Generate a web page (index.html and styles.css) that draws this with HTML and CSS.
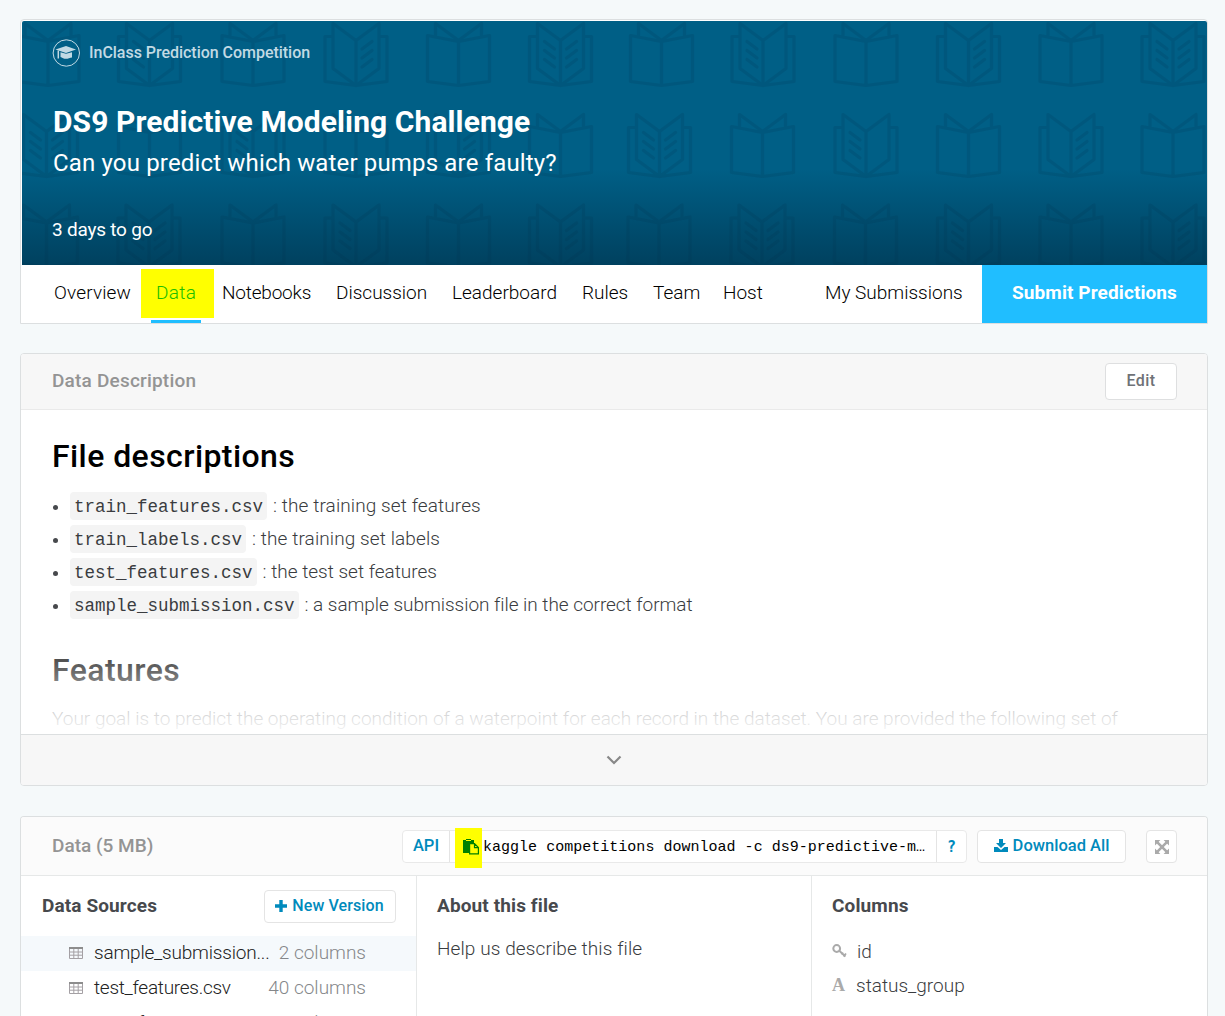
FILE: index.html
```html
<!DOCTYPE html>
<html lang="en">
<head>
<meta charset="utf-8">
<title>DS9 Predictive Modeling Challenge</title>
<link rel="stylesheet" href="styles.css">
</head>
<body>
<svg class="defs" aria-hidden="true">
  <defs>
    <g id="plain"><path d="M-31 14L0 20L31 14V60L0 64L-31 60ZM0 20V64M-23 14V2L0 19L23 2V14"/></g>
    <g id="open"><path d="M-23 2L0 19L23 2V47L0 64L-23 47ZM0 19V64M-23 15H-31V60L0 64L31 60V15H23"/></g>
    <g id="left"><use href="#open"/><path d="M-16 20L-6 27.500M-16 29L-6 36.500M-16 38L-6 45.500"/></g>
    <g id="right"><use href="#open"/><path d="M16 20L6 27.500M16 29L6 36.500M16 38L6 45.500"/></g>
    <g id="both"><use href="#left"/><path d="M16 20L6 27.500M16 29L6 36.500M16 38L6 45.500"/></g>
    <symbol id="table" viewBox="0 0 14 12"><path d="M.5 1.500h13v10H.5zM.5 5h13M.5 8.200h13M4.800 2v9.500M9.200 2v9.500" fill="none" stroke="#a4a0a4"/><path d="M0 0h14v2H0z" fill="#8d8d8d"/></symbol>
  </defs>
</svg>
<main class="page">
  <header class="hero-card">
    <div class="hero">
      <svg class="books" width="1185" height="244" viewBox="22 21 1185 244">
        <g transform="translate(0 21.500)"><use href="#plain" x="48"/><use href="#left" x="149.500"/><use href="#plain" x="253"/><use href="#right" x="356"/><use href="#plain" x="458.500"/><use href="#both" x="560.500"/><use href="#plain" x="661.500"/><use href="#left" x="763"/><use href="#plain" x="866"/><use href="#right" x="968.500"/><use href="#plain" x="1071"/><use href="#both" x="1173"/></g>
        <g transform="translate(0 112.500)"><use href="#both" x="46.500"/><use href="#plain" x="149.500"/><use href="#left" x="253"/><use href="#plain" x="356"/><use href="#right" x="458.500"/><use href="#plain" x="560.500"/><use href="#both" x="659.500"/><use href="#plain" x="762.500"/><use href="#left" x="866"/><use href="#plain" x="968.500"/><use href="#right" x="1071"/><use href="#plain" x="1173"/></g>
        <g transform="translate(0 203)"><use href="#plain" x="46.500"/><use href="#both" x="149"/><use href="#plain" x="253"/><use href="#left" x="356"/><use href="#plain" x="458.500"/><use href="#right" x="560.500"/><use href="#plain" x="659"/><use href="#both" x="762"/><use href="#plain" x="865.500"/><use href="#left" x="968.500"/><use href="#plain" x="1071"/><use href="#right" x="1173"/></g>
      </svg>
      <div class="hero-text">
        <div class="kind">
          <svg width="28" height="28" viewBox="0 0 28 28"><circle cx="14.300" cy="14" r="13.200" fill="none" stroke="currentColor"/><path d="M3.500 10.500L14 7l10 3.500L14 14z" fill="currentColor"/><path d="M8.500 13.200l5.500 1.600 6-1.600v5.300c-2 .3-4 1.300-6 1.300s-4-1-5.500-1.800z" fill="currentColor"/><path d="M6.300 11.500v8" stroke="currentColor" stroke-width="1.500"/></svg>
          <span>InClass Prediction Competition</span>
        </div>
        <h1>DS9 Predictive Modeling Challenge</h1>
        <p class="sub">Can you predict which water pumps are faulty?</p>
        <p class="left-time">3 days to go</p>
      </div>
    </div>
    <nav class="tabs">
      <a class="t1">Overview</a><a class="active">Data</a><a class="t3">Notebooks</a><a class="t4">Discussion</a><a class="t5">Leaderboard</a><a class="t6">Rules</a><a class="t7">Team</a><a class="t8">Host</a>
      <a class="mine">My Submissions</a><a class="submit">Submit Predictions</a>
    </nav>
  </header>

  <section class="card description">
    <div class="card-head"><h2 class="desc-title">Data Description</h2><button class="edit">Edit</button></div>
    <div class="desc-body">
      <h3 class="files-title">File descriptions</h3>
      <ul>
        <li><code>train_features.csv</code><span class="d1">: the training set features</span></li>
        <li><code>train_labels.csv</code><span class="d1">: the training set labels</span></li>
        <li><code>test_features.csv</code><span>: the test set features</span></li>
        <li><code>sample_submission.csv</code><span class="d4">: a sample submission file in the correct format</span></li>
      </ul>
      <h3 class="features-title">Features</h3>
      <p class="goal">Your goal is to predict the operating condition of a waterpoint for each record in the dataset. You are provided the following set of</p>
      <div class="fade"></div>
    </div>
    <div class="expand"><svg width="16" height="10" viewBox="0 0 16 10"><path d="M1.500 1.500L8 8l6.500-6.500" fill="none" stroke="#888" stroke-width="2.200"/></svg></div>
  </section>

  <section class="card data">
    <div class="data-head">
      <h2>Data (5 MB)</h2>
      <div class="api">
        <span class="api-label">API</span>
        <span class="copy"><svg width="16" height="16" viewBox="0 0 16 16"><path d="M0 1h3V0h5v1h3v3H7.500L6 6v8H0z" fill="#008000"/><path d="M3 1.500h5" stroke="#ff0"/><path d="M6.600 4.600h4.900l3.900 3.900v6.400H6.600zM11.500 4.600v4h3.900" fill="#ff0" stroke="#008000" stroke-width="1.200"/></svg></span>
        <span class="cmd">kaggle competitions download -c ds9-predictive-m…</span>
        <span class="help">?</span>
      </div>
      <button class="download"><svg width="14" height="13" viewBox="0 0 14 13"><path d="M5 0h4v4h3L7 9 2 4h3zM0 8h3.500L7 11l3.500-3H14v5H0z" fill="currentColor"/></svg><span>Download All</span></button>
      <button class="full"><svg width="14" height="14" viewBox="0 0 13 13"><path d="M2 2l9 9M11 2l-9 9" stroke="#aaa" stroke-width="2.400"/><path d="M0 0h5L0 5zM13 0v5L8 0zM0 13V8l5 5zM13 13H8l5-5z" fill="#aaa"/></svg></button>
    </div>
    <div class="columns">
      <div class="sources">
        <div class="src-head"><h4>Data Sources</h4><button class="new"><svg width="12" height="12" viewBox="0 0 12 12"><path d="M6 0v12M0 6h12" stroke="currentColor" stroke-width="3.400"/></svg><span>New Version</span></button></div>
        <div class="file selected"><svg width="14" height="12"><use href="#table"/></svg><span class="f1">sample_submission...</span><em>2 columns</em></div>
        <div class="file"><svg width="14" height="12"><use href="#table"/></svg><span class="f2">test_features.csv</span><em>40 columns</em></div>
        <div class="file"><svg width="14" height="12"><use href="#table"/></svg><span class="f2">train_features.csv</span><em>40 columns</em></div>
      </div>
      <div class="about"><h4>About this file</h4><p>Help us describe this file</p></div>
      <div class="cols"><h4>Columns</h4>
        <div class="col"><svg width="15" height="14" viewBox="0 0 15 14"><circle cx="4.700" cy="4.500" r="3.400" fill="none" stroke="#aaa" stroke-width="2"/><path d="M7 6.500l6.500 6M9.500 10.500L11 8.500M11.500 12.500L14 9.500" stroke="#aaa" stroke-width="1.900"/></svg><span>id</span></div>
        <div class="col"><b>A</b><span>status_group</span></div>
      </div>
    </div>
  </section>
</main>
</body>
</html>
```

FILE: styles.css
```css
* { box-sizing: border-box; }
html, body { margin: 0; height: 1016px; overflow: hidden; }
body { background: #f5f9fa; font-family: Roboto, "Liberation Sans", sans-serif; font-size: 19px; color: #3a3c40; }
h1, h2, h3, h4, p, ul { margin: 0; padding: 0; font-weight: 400; }
button { font: inherit; background: #fff; border: 1px solid #e4e4e4; border-radius: 4px; padding: 0; color: #008abc; white-space: nowrap; }
.defs { display: block; width: 0; height: 0; }
.page { margin: 0 17px 0 20px; white-space: nowrap; }

.hero-card { margin-top: 19px; height: 305px; border: 1px solid #dcdfe0; border-radius: 4px 4px 0 0; background: #fff; padding: 1px 0 0 1px; }
.hero { position: relative; height: 244px; overflow: hidden; border-radius: 2px 2px 0 0; background: linear-gradient(#005f86 0, #005f86 148px, #00415f 244px); color: #fff; }
.books { position: absolute; left: 0; top: 0; fill: none; stroke: #003049; stroke-opacity: .15; stroke-width: 3.200; stroke-linejoin: round; stroke-linecap: round; }
.hero-text { position: relative; padding: 18px 0 0 30px; }
.kind { display: flex; align-items: center; height: 28px; gap: 9px; font-size: 16px; font-weight: 500; color: #c2dae4; }
.kind span { padding-bottom: 2px; letter-spacing: -.03px; }
h1 { margin-top: 35px; margin-left: 1px; font-size: 30px; line-height: 40px; font-weight: 700; letter-spacing: .09px; }
.sub { margin-left: 1px; margin-top: 1px; font-size: 24px; line-height: 40px; letter-spacing: .16px; }
.left-time { margin-top: 33px; font-size: 19px; line-height: 28px; letter-spacing: -.22px; }

.tabs { display: flex; height: 58px; color: #000; font-size: 19px; line-height: 56px; font-weight: 300; }
.tabs a { flex: none; }
.t1 { width: 87px; margin-left: 32px; letter-spacing: .15px; }
.active { width: 73px; height: 49px; margin-top: 4px; margin-right: 8px; padding-left: 15px; line-height: 48px; letter-spacing: .3px; background: #ff0; color: #20be00; position: relative; }
.active::after { content: ""; position: absolute; left: 10px; top: 51px; width: 50px; height: 3px; background: #20beff; }
.t3 { width: 114px; letter-spacing: -.2px; }
.t4 { width: 116px; }
.t5 { width: 130px; }
.t6 { width: 71px; }
.t7 { width: 70px; }
.t8 { width: 102px; }
.mine { width: 157px; }
.submit { width: 225px; background: #20beff; color: #fff; font-weight: 700; text-align: center; letter-spacing: .1px; }

.card { background: #fff; border: 1px solid #dcdfe0; border-radius: 4px; overflow: hidden; }
.description { margin-top: 29px; height: 433px; display: flex; flex-direction: column; }
.card-head { flex: none; display: flex; justify-content: space-between; height: 56px; background: #f7f7f7; border-bottom: 1px solid #eaeaea; padding: 9px 30px 0 31px; }
h2 { font-size: 19px; line-height: 36px; font-weight: 500; color: #949494; }
.desc-title { letter-spacing: .2px; }
.edit { width: 72px; height: 37px; font-size: 16px; font-weight: 500; letter-spacing: .4px; padding-bottom: 2px; color: #6f7277; border-color: #dedfe0; }
.desc-body { position: relative; flex: 1; padding: 25px 31px 0; overflow: hidden; }
h3 { font-size: 32px; line-height: 42px; font-weight: 500; color: #000; letter-spacing: .42px; }
ul { list-style: none; margin-top: 13px; }
li { height: 33px; line-height: 32px; display: flex; font-weight: 300; }
li::before { content: ""; width: 5px; height: 5px; border-radius: 50%; background: #47494d; margin: 15px 12px 0 1px; }
code { height: 28px; margin-top: 2px; padding: 0 4px; line-height: 31px; border-radius: 4px; background: #f4f4f4; font-family: "Liberation Mono", monospace; font-size: 17.500px; margin-right: 6px; }
.d1 { letter-spacing: .1px; }
.d4 { letter-spacing: -.04px; }
.features-title { margin-top: 27px; }
.goal { line-height: 28px; margin-top: 14px; font-weight: 300; }
.fade { position: absolute; left: 0; right: 0; bottom: 0; height: 110px; background: linear-gradient(rgba(255,255,255,0), rgba(255,255,255,.97)); }
.expand { flex: none; height: 51px; background: #f7f7f7; border-top: 1px solid #dcdfe0; display: flex; align-items: center; justify-content: center; }

.data { margin-top: 30px; height: 200px; border-radius: 4px 4px 0 0; border-bottom: 0; }
.data-head { display: flex; height: 59px; padding: 13px 30px 0 31px; background: #fbfbfb; border-bottom: 1px solid #e6e8e8; }
.data-head h2 { width: 350px; line-height: 31px; }
.api { display: flex; width: 565px; height: 33px; border: 1px solid #e9e9e9; border-radius: 4px; background: #fff; line-height: 29px; }
.api-label { width: 47px; border-right: 1px solid #e4e4e4; text-align: center; color: #008abc; font-size: 16.500px; font-weight: 500; height: 31px; }
.copy { width: 27px; height: 40px; margin: -3px 0 0 5px; background: #ff0; padding: 11px 0 0 8px; line-height: 0; }
.cmd { width: 454px; padding-left: 1px; color: #000; font-family: "Liberation Mono", monospace; font-size: 15px; letter-spacing: .02px; line-height: 34px; }
.help { flex: 1; border-left: 1px solid #e4e4e4; text-align: center; color: #008abc; font: 700 15px/33px "DejaVu Sans Mono", monospace; }
.download { width: 149px; height: 33px; margin-left: 10px; display: flex; align-items: center; justify-content: center; gap: 5px; font-size: 16.500px; font-weight: 500; padding-bottom: 2px; }
.full { width: 31px; height: 33px; margin-left: 20px; display: flex; align-items: center; justify-content: center; }
.columns { display: grid; grid-template-columns: 396px 395px 1fr; height: 140px; }
h4 { font-size: 19px; line-height: 32px; height: 30px; font-weight: 700; color: #47494d; letter-spacing: .12px; }
.sources { height: 140px; overflow: hidden; border-right: 1px solid #e6e8e8; }
.src-head { display: flex; justify-content: space-between; height: 60px; padding: 14px 20px 0 21px; }
.new { width: 132px; height: 33px; display: flex; align-items: center; justify-content: center; gap: 5px; font-size: 16px; font-weight: 500; padding: 0 1px 2px 0; letter-spacing: .1px; }
.file { display: flex; align-items: center; height: 35px; padding: 0 50px 2px 48px; font-weight: 300; color: #222; }
.file svg { margin-right: 11px; }
.file em { margin-left: auto; font-style: normal; color: #85878a; }
.f1 { letter-spacing: -.2px; }
.f2 { letter-spacing: -.27px; }
.selected { background: #f5f9fc; }
.about { padding: 14px 20px; border-right: 1px solid #e6e8e8; }
.about p { margin-top: 15px; line-height: 28px; font-weight: 300; letter-spacing: .1px; }
.cols { padding: 14px 20px; }
.col { display: flex; align-items: center; height: 34px; font-weight: 300; }
.cols h4 { margin-bottom: 14px; }
.col svg { margin-right: 10px; }
.col b { width: 24px; font: 700 18px/20px "Liberation Serif", serif; color: #aaa; }
```
